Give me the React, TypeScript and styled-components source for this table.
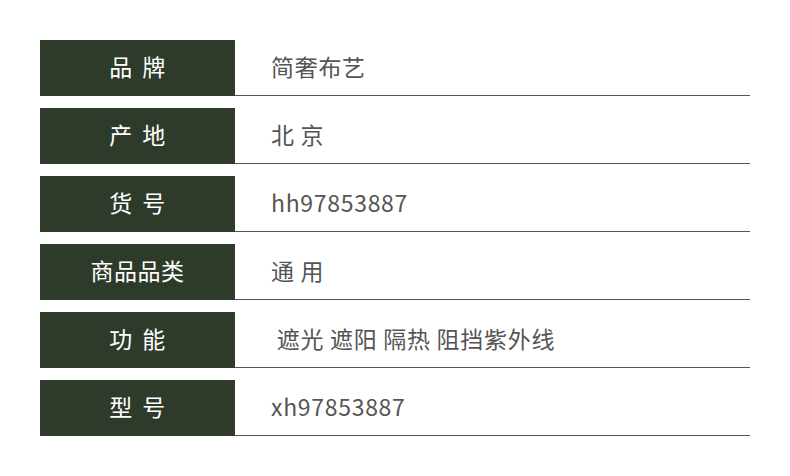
import React from 'react'
import styled, { createGlobalStyle } from 'styled-components'

const GlobalStyle = createGlobalStyle`
  body {
    margin: 0;
    background: #ffffff;
    font-family: "Noto Sans CJK SC", "Noto Sans", sans-serif;
  }
`

const rows = [
  { label: '品 牌', value: '简奢布艺' },
  { label: '产 地', value: '北 京' },
  { label: '货 号', value: 'hh97853887' },
  { label: '商品品类', value: '通 用' },
  { label: '功 能', value: ' 遮光 遮阳 隔热 阻挡紫外线' },
  { label: '型 号', value: 'xh97853887' },
]

export default function App() {
  return (
    <>
      <GlobalStyle />
      <Table>
        {rows.map((r) => (
          <Row key={r.label}>
            <Label>{r.label}</Label>
            <Value>{r.value}</Value>
          </Row>
        ))}
      </Table>
    </>
  )
}

const Table = styled.div`
  display: flex;
  flex-direction: column;
  gap: 12px;
  width: 710px;
  padding: 40px 40px 0;
`

const Row = styled.div`
  display: flex;
  align-items: stretch;
  height: 55px;
  border-bottom: 1px solid #555555;
`

const Label = styled.div`
  flex: 0 0 195px;
  margin-bottom: -1px;
  padding-bottom: 3px;
  box-sizing: border-box;
  display: flex;
  align-items: center;
  justify-content: center;
  background: #2e3b2a;
  color: #ffffff;
  font-size: 23px;
  line-height: 1;
  letter-spacing: 0.5px;
  word-spacing: 4px;
  white-space: pre;
`

const Value = styled.div`
  display: flex;
  align-items: center;
  padding-left: 36px;
  padding-bottom: 3px;
  color: #555555;
  font-size: 23px;
  line-height: 1;
  letter-spacing: 0.7px;
  white-space: pre;
`
